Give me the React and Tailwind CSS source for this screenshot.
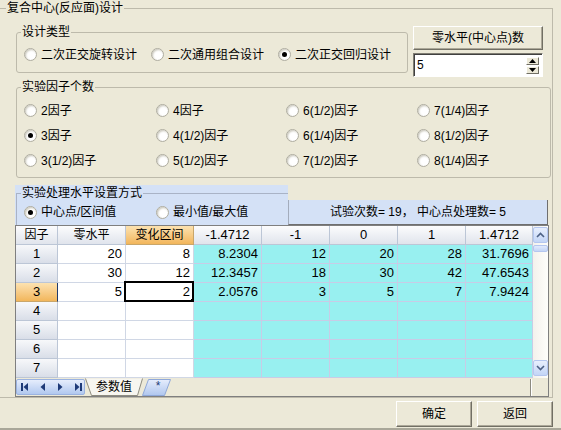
import React from 'react';

const FONT = "font-['Liberation_Sans','Noto_Sans_CJK_SC',sans-serif]";

function Radio({ checked, label, className = '' }) {
  return (
    <div className={`flex items-center ${className}`}>
      <span className="w-[13px] h-[13px] rounded-full border border-[#AEAC9F] bg-white shadow-[inset_1px_1px_2px_#C8C6BA] flex items-center justify-center shrink-0">
        {checked && <span className="w-[5px] h-[5px] rounded-full bg-black" />}
      </span>
      <span className="ml-[4px] text-[12px] leading-[14px] whitespace-nowrap">{label}</span>
    </div>
  );
}

function Group({ title, className = '', children }) {
  return (
    <div className={`relative border border-[#BDBAAB] rounded-[3px] ${className}`}>
      <span className="absolute left-[4px] top-[-8px] px-[1px] bg-[#ECE9D8] text-[12px] leading-[14px] whitespace-nowrap">{title}</span>
      {children}
    </div>
  );
}

function WinButton({ children, className = '' }) {
  return (
    <div className={`flex items-center justify-center bg-[#ECE9D8] border border-t-white border-l-white border-b-[#716F64] border-r-[#716F64] shadow-[inset_-1px_-1px_0_#ACA899] text-[12px] ${className}`}>
      {children}
    </div>
  );
}

const factors = [
  ['2因子', '4因子', '6(1/2)因子', '7(1/4)因子'],
  ['3因子', '4(1/2)因子', '6(1/4)因子', '8(1/2)因子'],
  ['3(1/2)因子', '5(1/2)因子', '7(1/2)因子', '8(1/4)因子'],
];

const headers = ['因子', '零水平', '变化区间', '-1.4712', '-1', '0', '1', '1.4712'];

const rows = [
  ['1', '20', '8', '8.2304', '12', '20', '28', '31.7696'],
  ['2', '30', '12', '12.3457', '18', '30', '42', '47.6543'],
  ['3', '5', '2', '2.0576', '3', '5', '7', '7.9424'],
  ['4', '', '', '', '', '', '', ''],
  ['5', '', '', '', '', '', '', ''],
  ['6', '', '', '', '', '', '', ''],
  ['7', '', '', '', '', '', '', ''],
];

function Chevron({ down }) {
  return (
    <svg width="9" height="6" viewBox="0 0 9 6">
      <path d={down ? 'M1 1 L4.5 4.5 L8 1' : 'M1 5 L4.5 1.5 L8 5'} fill="none" stroke="#4D6185" strokeWidth="1.6" />
    </svg>
  );
}

function ScrollBar() {
  return (
    <div className="w-[15px] h-[152px] flex flex-col bg-gradient-to-r from-[#F3F1EC] to-[#FEFEFB]">
      <div className="mt-[1px] h-[16px] rounded-[2px] border border-[#B4C6EF] bg-gradient-to-b from-[#E8EFFD] to-[#C3D5F6] flex items-center justify-center">
        <Chevron />
      </div>
      <div className="mt-[2px] h-[7px] rounded-[2px] border border-[#B4C6EF] bg-gradient-to-b from-[#E2EAFC] to-[#C3D5F6]" />
      <div className="flex-1" />
      <div className="mb-[2px] h-[16px] rounded-[2px] border border-[#B4C6EF] bg-gradient-to-b from-[#E8EFFD] to-[#C3D5F6] flex items-center justify-center">
        <Chevron down />
      </div>
    </div>
  );
}

function DataGrid() {
  return (
    <div className="ml-[15px] w-[534px] h-[172px] border border-[#7F7F7F] flex flex-col bg-[#ECE9D8]">
      <div className="flex h-[152px]">
        <div className="grid grid-cols-[42px_68px_68px_68px_68px_68px_68px_67px] w-[517px] text-[13px]">
          {headers.map((h, i) => (
            <div
              key={h}
              className={
                i === 2
                  ? 'h-[19px] border-r border-b border-[#C9A66A] bg-gradient-to-b from-[#FCE2B0] to-[#F2B65A] flex items-center justify-center text-[12px]'
                  : 'h-[19px] border-r border-b border-[#BCC6D6] bg-gradient-to-b from-[#FCFCFD] to-[#E0E4EC] flex items-center justify-center'
              }
            >
              <span className={i < 3 ? 'text-[12px]' : ''}>{h}</span>
            </div>
          ))}
          {rows.map((r, ri) =>
            r.map((v, ci) => {
              if (ci === 0) {
                return (
                  <div
                    key={ci}
                    className={
                      ri === 2
                        ? 'h-[19px] border-r border-r-[#1F3A6E] border-b border-b-[#C9A66A] bg-gradient-to-b from-[#FCE2B0] to-[#F2B65A] flex items-center justify-center'
                        : 'h-[19px] border-r border-b border-[#BCC6D6] bg-gradient-to-b from-[#F7F8FA] to-[#D9DEE8] flex items-center justify-center'
                    }
                  >
                    {v}
                  </div>
                );
              }
              const cyan = ci >= 3;
              return (
                <div
                  key={ci}
                  className={
                    cyan
                      ? 'relative h-[19px] border-r border-b border-[#C8CCE6] bg-[#98F0F0] flex items-center justify-end pr-[3px]'
                      : 'relative h-[19px] border-r border-b border-[#D0D7E5] bg-white flex items-center justify-end pr-[3px]'
                  }
                >
                  {v}
                  {ri === 2 && ci === 2 && (
                    <>
                      <span className="absolute left-[-2px] top-[-2px] right-[-1px] bottom-[-1px] border-2 border-black" />
                      <span className="absolute right-[-3px] bottom-[-3px] w-[5px] h-[5px] bg-black" />
                    </>
                  )}
                </div>
              );
            })
          )}
        </div>
        <ScrollBar />
      </div>
      <div className="h-[18px] flex items-center">
        <div className="w-[69px] h-[16px] rounded-[2px] border border-[#9BB3E0] bg-gradient-to-b from-[#E6EDFC] to-[#B1C8EF]">
          <svg width="69" height="14" viewBox="0 0 69 14">
            <g fill="#1E3A78">
              <rect x="4" y="3" width="2" height="8" />
              <path d="M11 3 L11 11 L6.5 7 Z" />
              <path d="M28 3 L28 11 L23.5 7 Z" />
              <path d="M41 3 L41 11 L45.5 7 Z" />
              <path d="M58 3 L58 11 L62.5 7 Z" />
              <rect x="63" y="3" width="2" height="8" />
            </g>
          </svg>
        </div>
        <div className="relative w-[86px] h-[18px]">
          <svg className="absolute inset-0" width="86" height="18" viewBox="0 0 86 18">
            <defs>
              <linearGradient id="tb" x1="0" y1="0" x2="0" y2="1">
                <stop offset="0" stopColor="#E6EDFC" />
                <stop offset="1" stopColor="#AFC6EE" />
              </linearGradient>
            </defs>
            <path d="M57.5 17.5 L63.5 1.5 L85.5 1.5 L79.5 17.5 Z" fill="url(#tb)" stroke="#8FA8D8" />
            <path d="M0.5 0.5 L6.5 17.5 L52.5 17.5 L57.5 0.5" fill="#F7F6F0" stroke="#8E8C80" />
          </svg>
          <span className="absolute left-[6px] w-[46px] top-0 h-[18px] flex items-center justify-center text-[12px]">参数值</span>
          <span className="absolute left-[64px] w-[18px] top-0 h-[16px] flex items-center justify-center text-[12px] text-[#1E3A78]">*</span>
        </div>
        <div className="ml-auto mr-[16px] w-[2px] h-[17px] border-l border-[#8C8A80] border-r border-r-white" />
      </div>
    </div>
  );
}

export default function App() {
  return (
    <div className={`w-[561px] h-[430px] bg-[#ECE9D8] overflow-hidden flex flex-col text-black ${FONT}`}>
      <div className="mt-[8px] w-[553px] h-[390px] relative border border-l-0 border-[#BDBAAB] flex flex-col">
        <span className="absolute left-[6px] top-[-9px] px-[1px] bg-[#ECE9D8] text-[12px] leading-[16px] whitespace-nowrap">复合中心(反应面)设计</span>

        {/* design type + center points */}
        <div className="mt-[17px] h-[50px] flex items-start">
          <Group title="设计类型" className="ml-[16px] mt-[6px] w-[392px] h-[41px]">
            <div className="h-full flex items-center pt-[4px] pl-[7px]">
              <Radio label="二次正交旋转设计" className="w-[127px]" />
              <Radio label="二次通用组合设计" className="w-[127px]" />
              <Radio label="二次正交回归设计" checked />
            </div>
          </Group>
          <div className="ml-[5px] w-[130px] flex flex-col">
            <WinButton className="h-[24px]">零水平(中心点)数</WinButton>
            <div className="mt-[3px] h-[24px] bg-white border border-t-[#7E7C72] border-l-[#7E7C72] border-b-white border-r-white shadow-[inset_1px_1px_0_#404040] flex items-center">
              <span className="pl-[3px] text-[12px] flex-1">5</span>
              <div className="mr-[3px] w-[13px] h-[17px] flex flex-col">
                <div className="h-[8px] bg-[#ECE9D8] border border-t-white border-l-white border-b-[#716F64] border-r-[#716F64] flex items-center justify-center">
                  <svg width="7" height="4" viewBox="0 0 7 4"><path d="M0 4 L3.5 0 L7 4 Z" fill="#000" /></svg>
                </div>
                <div className="mt-[1px] h-[8px] bg-[#ECE9D8] border border-t-white border-l-white border-b-[#716F64] border-r-[#716F64] flex items-center justify-center">
                  <svg width="7" height="4" viewBox="0 0 7 4"><path d="M0 0 L3.5 4 L7 0 Z" fill="#000" /></svg>
                </div>
              </div>
            </div>
          </div>
        </div>

        {/* factor count */}
        <Group title="实验因子个数" className="ml-[16px] mt-[11px] w-[535px] h-[91px]">
          <div className="pt-[10px] pl-[7px]">
            {factors.map((row, ri) => (
              <div key={ri} className="h-[25px] grid grid-cols-[132px_130px_131px_1fr] items-center">
                {row.map((f) => (
                  <Radio key={f} label={f} checked={f === '3因子'} />
                ))}
              </div>
            ))}
          </div>
        </Group>

        {/* level setting mode */}
        <div className="ml-[15px] mt-[7px] h-[40px] flex items-end">
          <div className="w-[273px] h-[40px] bg-[#D4E1F6] pt-[8px] pl-[1px]">
            <div className="relative h-[32px] border-l border-t border-[#A9B3C6]">
              <span className="absolute left-[4px] top-[-8px] px-[1px] bg-[#D4E1F6] text-[12px] leading-[14px] whitespace-nowrap">实验处理水平设置方式</span>
              <div className="mt-[11px] h-[14px] flex items-center pl-[7px]">
                <Radio label="中心点/区间值" checked className="w-[132px]" />
                <Radio label="最小值/最大值" />
              </div>
            </div>
          </div>
          <div className="w-[260px] h-[25px] bg-[#D4E1F6] border-l border-l-[#A3ACBC] border-r border-b border-[#6F6F6F] flex items-center justify-center text-[12px] whitespace-nowrap">
            试验次数= 19， 中心点处理数= 5
          </div>
        </div>

        <DataGrid />
      </div>

      <div className="mt-[3px] flex justify-end pr-[8px] gap-[5px]">
        <WinButton className="w-[76px] h-[26px]">确定</WinButton>
        <WinButton className="w-[76px] h-[26px]">返回</WinButton>
      </div>
      <div className="mt-[1px] h-[2px] bg-[#A9A799]" />
    </div>
  );
}
